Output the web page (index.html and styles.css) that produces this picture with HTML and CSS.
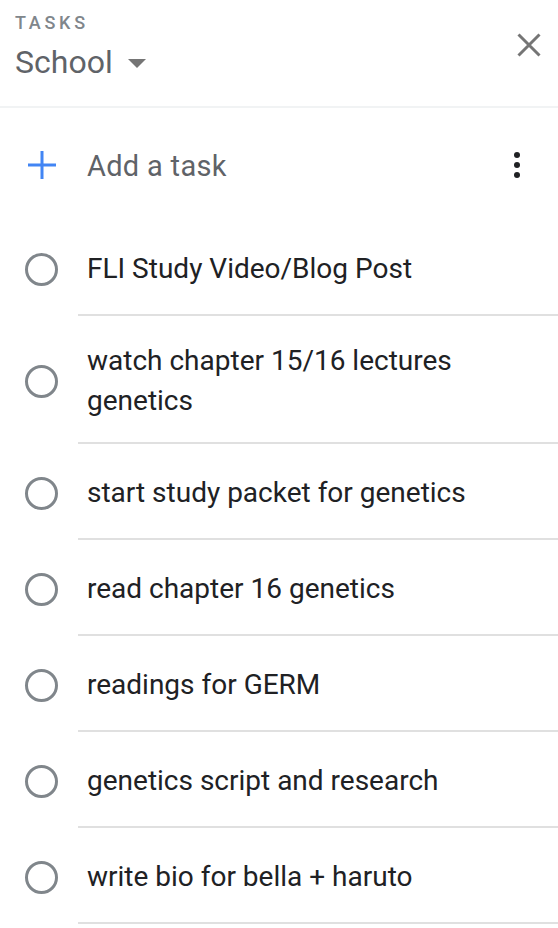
FILE: index.html
```html
<!DOCTYPE html>
<html>
<head>
<meta charset="UTF-8">
<meta name="viewport" content="width=device-width, initial-scale=1.0">
<title>Tasks</title>
<link rel="stylesheet" href="styles.css">
</head>
<body>
  <div id="panel">
    <div class="header">
      <div class="title-block">
        <div class="eyebrow">TASKS</div>
        <div class="list-name">
          School
          <svg class="caret" width="18" height="9" viewBox="0 0 18 9"><path d="M0 0h18L9 9z" fill="#757575"/></svg>
        </div>
      </div>
      <button class="close-btn" aria-label="Close">
        <svg width="24" height="24" viewBox="0 0 24 24">
          <path d="M1.5 1.5l21 21M22.5 1.5l-21 21" stroke="#757575" stroke-width="3" fill="none"/>
        </svg>
      </button>
    </div>

    <div class="add-row">
      <svg class="plus" width="30" height="30" viewBox="0 0 30 30">
        <path d="M15 1v28M1 15h28" stroke="#4285f4" stroke-width="3" fill="none"/>
      </svg>
      <span class="add-label">Add a task</span>
      <svg class="kebab" width="8" height="30" viewBox="0 0 8 30">
        <circle cx="4" cy="5" r="3" fill="#202124"/>
        <circle cx="4" cy="15" r="3" fill="#202124"/>
        <circle cx="4" cy="25" r="3" fill="#202124"/>
      </svg>
    </div>

    <ul class="task-list">
      <li class="task">
        <span class="check"></span>
        <div class="task-text">FLI Study Video/Blog Post</div>
      </li>
      <li class="task">
        <span class="check"></span>
        <div class="task-text">watch chapter 15/16 lectures genetics</div>
      </li>
      <li class="task">
        <span class="check"></span>
        <div class="task-text">start study packet for genetics</div>
      </li>
      <li class="task">
        <span class="check"></span>
        <div class="task-text">read chapter 16 genetics</div>
      </li>
      <li class="task">
        <span class="check"></span>
        <div class="task-text">readings for GERM</div>
      </li>
      <li class="task">
        <span class="check"></span>
        <div class="task-text">genetics script and research</div>
      </li>
      <li class="task">
        <span class="check"></span>
        <div class="task-text">write bio for bella + haruto</div>
      </li>
    </ul>
  </div>
</body>
</html>
```

FILE: styles.css
```css
:root {
  --text-color: #202124;
  --muted: #5f6368;
  --line: #e0e0e0;
}

* {
  box-sizing: border-box;
}

body {
  margin: 0;
  background: #fff;
  font-family: Roboto, "Noto Sans", sans-serif;
  color: var(--text-color);
}

#panel {
  width: 558px;
}

.header {
  display: flex;
  justify-content: space-between;
  align-items: flex-start;
  height: 108px;
  padding: 12px 16px 0 15px;
  border-bottom: 2px solid #f1f3f4;
}

.eyebrow {
  font-size: 18px;
  font-weight: 500;
  letter-spacing: 3.7px;
  color: #80868b;
  line-height: 22px;
}

.list-name {
  display: flex;
  align-items: center;
  gap: 15px;
  font-size: 32px;
  line-height: 40px;
  margin-top: 8px;
  color: var(--muted);
}

.caret {
  margin-top: 3px;
}

.close-btn {
  background: none;
  border: none;
  padding: 0;
  margin-top: 21px;
  margin-right: 1px;
  cursor: pointer;
  display: flex;
}

.add-row {
  display: flex;
  align-items: center;
  height: 112px;
  padding: 2px 37px 0 27px;
}

.plus {
  flex: none;
}

.add-label {
  flex: 1;
  margin-left: 30px;
  margin-top: 2px;
  font-size: 29px;
  letter-spacing: 0.3px;
  color: var(--muted);
}

.task-list {
  list-style: none;
  margin: 0;
  padding: 0;
}

.task {
  display: flex;
  align-items: center;
}

.check {
  flex: none;
  width: 33px;
  height: 33px;
  margin: 2px 20px 0 25px;
  border: 3px solid #80868b;
  border-radius: 50%;
}

.task-text {
  flex: 1;
  display: flex;
  align-items: center;
  min-height: 96px;
  padding: 25px 16px 21px 9px;
  border-bottom: 2px solid var(--line);
  font-size: 28px;
  line-height: 40px;
}
```
